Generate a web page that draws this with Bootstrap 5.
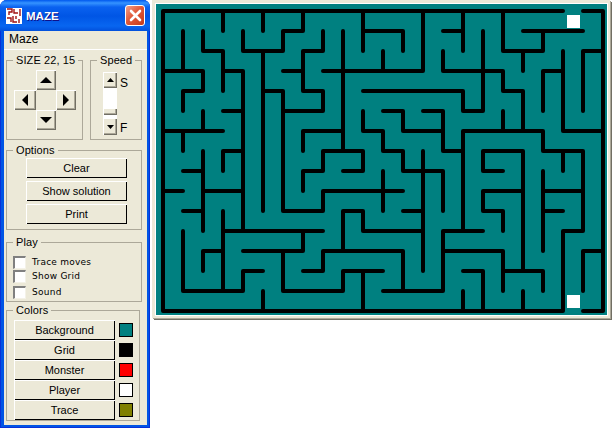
<!DOCTYPE html>
<html lang="en">
<head>
<meta charset="utf-8">
<title>MAZE</title>
<link href="https://cdn.jsdelivr.net/npm/bootstrap@5.3.0/dist/css/bootstrap.min.css" rel="stylesheet">
<style>
html,body{margin:0;background:#fff;overflow:hidden}
body{font:11px/13px "Liberation Sans",Arial,sans-serif;color:#000}
.xp-win{width:150px;height:428px;background:#0055e5;border-radius:7px 7px 0 0;box-shadow:inset 1px 0 0 #0831d9,inset -1px 0 0 #0831d9,inset 0 -1px 0 #0831d9}
.xp-title{height:31px;flex:none;border-radius:7px 7px 0 0;background:linear-gradient(180deg,#0058ee 0,#3593ff 3px,#0a62f0 7px,#0055e5 16px,#0866f0 26px,#0250dc 31px);padding:0 5px 0 6px}
.xp-name{font:bold 11.5px/18px "Liberation Sans",sans-serif;color:#fff;margin-left:4px;text-shadow:1px 1px 0 #0f1089}
.xp-close{width:20px;height:21px;margin-left:auto;margin-top:-1px;padding:0;border:1px solid #fff;border-radius:3px;background:linear-gradient(135deg,#f0a08a,#e1593a 45%,#c33a1a)}
.xp-body{margin:0 3px 4px 4px;background:#ece9d8;padding-bottom:4px}
.xp-menu{height:19px;flex:none;padding-left:5px;border-bottom:1px solid #fff;font-size:12px;line-height:16px}
.xp-groups{padding:4px 5px 0 2px}
.gb{border:1px solid #aca899;margin:0;min-width:0}
.gb legend{float:none;width:auto;white-space:nowrap;font:11px/13px "Liberation Sans",sans-serif;letter-spacing:.1px;margin:0 0 0 6px;padding:0 3px}
.gb-size{width:77px;height:86px;padding:3px 0 0 0}
.gb-speed{width:52px;height:86px;padding:5px 0 0 0;margin-left:7px}
.gb-opts{width:136px;height:86px;padding:1px 0 0 0;margin-top:4px}
.gb-play{width:136px;height:66px;padding:6px 0 0 0;margin-top:6px}
.gb-cols{width:134px;height:117px;padding:3px 0 0 0;margin-top:2px}
.arrows{display:grid;grid-template-columns:22px 20px 20px;grid-template-rows:20px 20px 20px;margin-left:7px}
.xp-btn{border:0;border-radius:0;padding:0;background:#ece9d8;color:#000;display:flex;align-items:center;justify-content:center;box-shadow:inset 1px 1px 0 #fff,inset -1px -1px 0 #716f64,inset -2px -2px 0 #aca899}
.xp-btn svg{display:block}
.a-up{grid-column:2;grid-row:1}
.a-left{grid-column:1;grid-row:2}
.a-right{grid-column:3;grid-row:2}
.a-down{grid-column:2;grid-row:3}
.sld-box{margin-left:12px}
.sld{width:14px}
.sld-up{height:16px}
.sld-w1{height:20px;background:#fff}
.sld-th{height:7px}
.sld-w2{height:3px;background:#fff}
.sld-dn{height:17px}
.sld-labels{margin-left:3px;padding:4px 0 0;font-size:12px;height:60px;line-height:14px}
.sld-labels span+span{margin-top:31px}
.opt-btn{width:101px;height:20px;margin-left:19px;font:11px/18px "Liberation Sans",sans-serif;box-shadow:inset 1px 1px 0 #fff,inset -1px -1px 0 #000}
.opt-btn+.opt-btn{margin-top:3px}
.chk-row{height:14px;margin-left:6px;font:9px/13px "DejaVu Sans",sans-serif;letter-spacing:.25px;margin-bottom:.5px}
.chk-row.last{margin-top:1.5px}
.chk-row input.form-check-input{width:13px;height:13px;margin:0 6px 0 0;float:none;border-radius:0;background:#fff;border:2px solid #808080;border-right:1px solid #f4f2e8;border-bottom:1px solid #f4f2e8;flex:none}
.col-row{margin-left:7px}
.col-btn{width:101px;height:20px;font:11px/18px "Liberation Sans",sans-serif;box-shadow:inset 1px 1px 0 #fff,inset -1px -1px 0 #000}
.swatch{width:14px;height:14px;border:1px solid #000;margin-left:4px;flex:none}
.sw-bg{background:#008080}.sw-gr{background:#000}.sw-mo{background:#f00}.sw-pl{background:#fff}.sw-tr{background:#808000}
.mz-panel{width:458px;height:318px;margin-left:2px;background:#ece9d8;border-style:solid;border-width:4px 3px 3px 4px;border-color:#ece9d8;box-shadow:1px 1px 0 #aca899,2px 2px 0 #716f64}
.mz-wrap{width:451px;height:311px;background:#008080;box-shadow:0 0 0 1px #fff}
.mz-wrap svg{display:block}
</style>
</head>
<body>
<div class="d-flex align-items-start">
  <div class="xp-win d-flex flex-column">
    <div class="xp-title d-flex align-items-center">
      <svg width="16" height="16" viewBox="0 0 16 16"><rect width="16" height="16" fill="#fff"/><path d="M1 1H6V4H3V7M8 1V5H12M14 1V8M1 10H5V14M7 8V14H11M13 11V15M10 8V11" fill="none" stroke="#a01010" stroke-width="1.4"/></svg>
      <span class="xp-name">MAZE</span>
      <button type="button" class="btn xp-close d-flex align-items-center justify-content-center" aria-label="Close"><svg width="13" height="13" viewBox="0 0 13 13"><path d="M2 2L11 11M11 2L2 11" stroke="#fff" stroke-width="2.6" stroke-linecap="round"/></svg></button>
    </div>
    <div class="xp-body flex-grow-1 d-flex flex-column">
      <div class="xp-menu">Maze</div>
      <div class="xp-groups">
        <div class="d-flex">
          <fieldset class="gb gb-size">
            <legend>SIZE 22, 15</legend>
            <div class="arrows">
              <button type="button" class="xp-btn a-up" aria-label="Up"><svg width="12" height="6"><path d="M6 0L12 6H0Z"/></svg></button>
              <button type="button" class="xp-btn a-left" aria-label="Left"><svg width="6" height="12"><path d="M0 6L6 0V12Z"/></svg></button>
              <button type="button" class="xp-btn a-right" aria-label="Right"><svg width="6" height="12"><path d="M6 6L0 0V12Z"/></svg></button>
              <button type="button" class="xp-btn a-down" aria-label="Down"><svg width="12" height="6"><path d="M6 6L12 0H0Z"/></svg></button>
            </div>
          </fieldset>
          <fieldset class="gb gb-speed">
            <legend>Speed</legend>
            <div class="d-flex sld-box">
              <div class="sld d-flex flex-column">
                <button type="button" class="xp-btn sld-up" aria-label="Slower"><svg width="7" height="4"><path d="M3.5 0L7 4H0Z"/></svg></button>
                <div class="sld-w1"></div>
                <div class="xp-btn sld-th"></div>
                <div class="sld-w2"></div>
                <button type="button" class="xp-btn sld-dn" aria-label="Faster"><svg width="7" height="4"><path d="M3.5 4L7 0H0Z"/></svg></button>
              </div>
              <div class="sld-labels d-flex flex-column"><span>S</span><span>F</span></div>
            </div>
          </fieldset>
        </div>
        <fieldset class="gb gb-opts">
          <legend>Options</legend>
          <button type="button" class="xp-btn opt-btn">Clear</button>
          <button type="button" class="xp-btn opt-btn">Show solution</button>
          <button type="button" class="xp-btn opt-btn">Print</button>
        </fieldset>
        <fieldset class="gb gb-play">
          <legend>Play</legend>
          <label class="chk-row d-flex align-items-center"><input class="form-check-input" type="checkbox">Trace moves</label>
          <label class="chk-row d-flex align-items-center"><input class="form-check-input" type="checkbox">Show Grid</label>
          <label class="chk-row last d-flex align-items-center"><input class="form-check-input" type="checkbox">Sound</label>
        </fieldset>
        <fieldset class="gb gb-cols">
          <legend>Colors</legend>
          <div class="col-row d-flex align-items-center"><button type="button" class="xp-btn col-btn">Background</button><span class="swatch sw-bg"></span></div>
          <div class="col-row d-flex align-items-center"><button type="button" class="xp-btn col-btn">Grid</button><span class="swatch sw-gr"></span></div>
          <div class="col-row d-flex align-items-center"><button type="button" class="xp-btn col-btn">Monster</button><span class="swatch sw-mo"></span></div>
          <div class="col-row d-flex align-items-center"><button type="button" class="xp-btn col-btn">Player</button><span class="swatch sw-pl"></span></div>
          <div class="col-row d-flex align-items-center"><button type="button" class="xp-btn col-btn">Trace</button><span class="swatch sw-tr"></span></div>
        </fieldset>
      </div>
    </div>
  </div>
  <div class="mz-panel">
    <div class="mz-wrap">
      <svg width="451" height="311" viewBox="-.35 -.35 22.55 15.55" role="img" aria-label="Maze grid">
        <rect x="20.2" y=".2" width=".65" height=".65" fill="#fff"/>
        <rect x="20.2" y="14.2" width=".65" height=".65" fill="#fff"/>
        <path fill="none" stroke="#000" stroke-width=".2" stroke-linecap="round" stroke-linejoin="round" d="
M0 0H20M21 0H22
M6 1H7M10 1H12M14 1H15M18 1H21
M2 2H3M4 2H6M7 2H8M17 2H19M21 2H22
M0 3H2M3 3H4M6 3H7M8 3H13M14 3H17M19 3H20
M1 4H2M5 4H6M7 4H8M10 4H15M17 4H18
M3 5H4M6 5H8M11 5H12M13 5H14M15 5H16
M0 6H3M7 6H9M10 6H11M12 6H14M15 6H19M20 6H22
M3 7H4M8 7H10M11 7H12M14 7H15M16 7H18M19 7H21
M1 8H2M7 8H8M9 8H10M12 8H14M16 8H17
M0 9H1M2 9H4M8 9H12M16 9H18M19 9H21
M1 10H2M6 10H8M9 10H10M12 10H13M16 10H17M19 10H20
M3 11H8M10 11H13M14 11H16M20 11H21
M2 12H3M4 12H7M8 12H12M14 12H17M21 12H22
M4 13H5M7 13H8M9 13H11M15 13H16M17 13H19
M1 14H4M6 14H9M11 14H14
M0 15H20M21 15H22
M0 0V15
M1 1V3M1 4V5M1 6V7M1 11V14
M2 1V2M2 3V4M2 5V6M2 7V11M2 12V13
M3 0V1M3 2V4M3 7V8M3 10V14
M4 1V2M4 3V11M4 13V14
M5 0V1M5 2V10M5 14V15
M6 1V2M6 4V10M6 12V14
M7 0V1M7 2V4M7 6V7M7 8V9M7 11V12
M8 1V2M8 4V5M8 7V8M8 9V10M8 12V13
M9 1V7M9 10V12M9 13V14
M10 0V2M10 5V6M10 7V8M10 10V11M10 13V15
M11 2V3M11 6V7M11 8V10
M12 1V2M12 5V6M12 7V8M12 12V14
M13 0V3M13 7V13
M14 2V3M14 5V7M14 8V10M14 11V14
M15 0V2M15 4V5M15 6V11M15 14V15
M16 1V5M16 7V8M16 9V10M16 13V15
M17 0V2M17 3V4M17 5V6M17 10V11M17 12V14
M18 2V3M18 4V6M18 7V13M18 14V15
M19 1V2M19 3V5M19 6V7M19 8V12M19 13V14
M20 2V6M20 7V8M20 11V15
M21 2V5M21 7V11M21 12V14
M22 0V15"/>
      </svg>
    </div>
  </div>
</div>
<script src="https://cdn.jsdelivr.net/npm/bootstrap@5.3.0/dist/js/bootstrap.bundle.min.js"></script>
</body>
</html>
